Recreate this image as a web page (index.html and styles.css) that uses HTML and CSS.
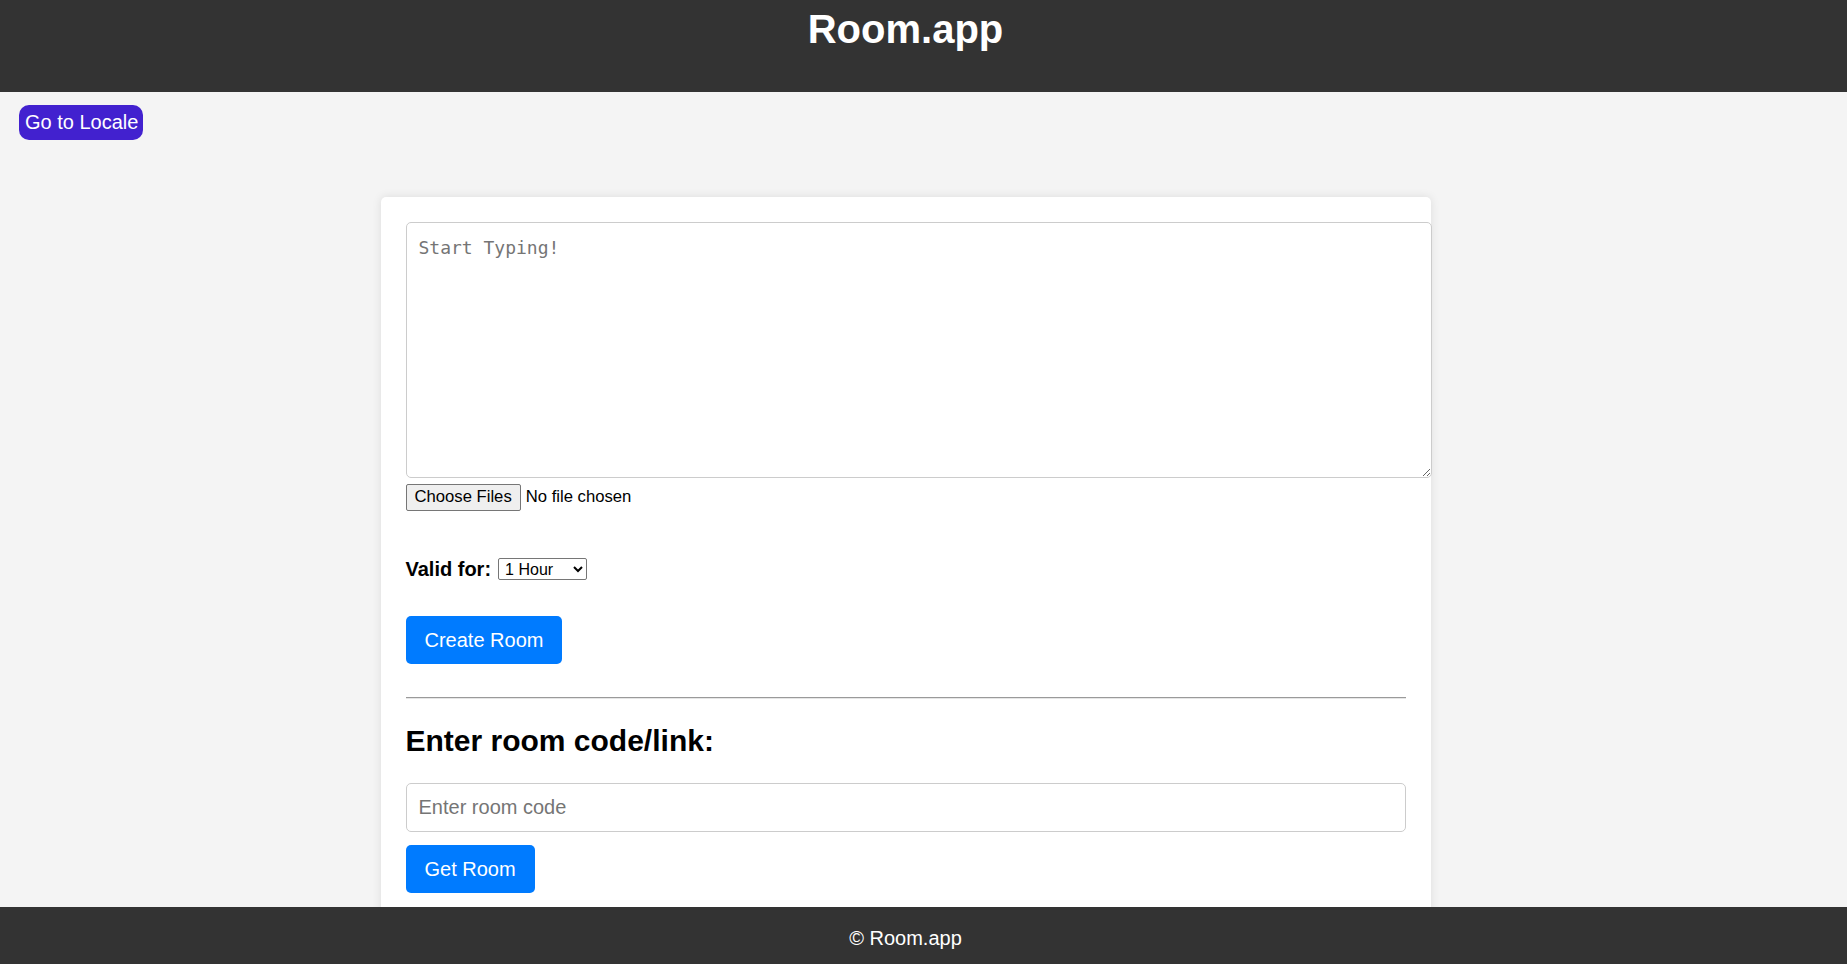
FILE: index.html
```html
<!DOCTYPE html>
<html lang="en">
<head>
<meta charset="utf-8">
<title>Room.app</title>
<link rel="stylesheet" href="styles.css">
</head>
<body>
<header class="site-header">
  <h1 class="site-title">Room.app</h1>
</header>

<div class="toolbar">
  <button class="locale-btn" type="button">Go to Locale</button>
</div>

<main class="container">
  <section class="card">
    <textarea class="editor" placeholder="Start Typing!"></textarea>
    <div class="file-row">
      <input class="file-input" type="file" multiple>
    </div>
    <div class="valid-row">
      <label class="valid-label" for="validity">Valid for:</label>
      <select class="valid-select" id="validity">
        <option>1 Hour</option>
        <option>1 Day</option>
        <option>1 Week</option>
      </select>
    </div>
    <div class="create-row">
      <button class="primary-btn" type="button">Create Room</button>
    </div>
    <hr class="divider">
    <h2 class="section-title">Enter room code/link:</h2>
    <input class="code-input" type="text" placeholder="Enter room code">
    <div class="get-row">
      <button class="primary-btn" type="button">Get Room</button>
    </div>
  </section>
</main>

<footer class="site-footer">
  <p class="footer-text">© Room.app</p>
</footer>
</body>
</html>
```

FILE: styles.css
```css
* {
  box-sizing: content-box;
}

html, body {
  margin: 0;
  padding: 0;
}

body {
  background: #f4f4f4;
  font-family: "Liberation Sans", Arial, sans-serif;
  font-size: 20px;
  color: #000;
}

.site-header {
  background: #333333;
  color: #fff;
  height: 85px;
  padding: 7px 36px 0 0;
  text-align: center;
}

.site-title {
  margin: 0;
  font-size: 40px;
  font-weight: bold;
}

.toolbar {
  padding: 13px 0 0 19px;
}

.locale-btn {
  display: block;
  background: #4221cf;
  color: #fff;
  border: none;
  border-radius: 10px;
  font-family: "Liberation Sans", Arial, sans-serif;
  font-size: 20px;
  line-height: 23px;
  padding: 6px 5px 6px 6px;
  cursor: pointer;
}

.container {
  padding: 57px 36px 80px 0;
}

.card {
  width: 1000px;
  margin: 0 auto;
  padding: 25px;
  background: #fff;
  border-radius: 5px;
  box-shadow: 0 0 10px rgba(0, 0, 0, 0.1);
}

.editor {
  display: block;
  width: 100%;
  height: 230px;
  padding: 12px;
  margin: 0;
  border: 1px solid #ccc;
  border-radius: 5px;
  font-family: "DejaVu Sans Mono", "Liberation Mono", monospace;
  font-size: 18px;
  line-height: 26px;
  resize: vertical;
  background: #fff;
}

.editor::placeholder {
  color: #757575;
}

.file-row {
  margin-top: 6px;
  height: 27px;
}

.file-input {
  font-family: "Liberation Sans", Arial, sans-serif;
  font-size: 16.67px;
  color: #000;
}

.file-input::file-selector-button {
  font-family: "Liberation Sans", Arial, sans-serif;
  font-size: 16.67px;
  padding: 2px 8px 3px 8px;
  margin-right: 5px;
  border: 1px solid #767676;
  border-radius: 2px;
  background: #efefef;
  color: #000;
}

.valid-row {
  margin-top: 47px;
  height: 22px;
  display: flex;
  align-items: center;
  gap: 7px;
}

.valid-label {
  font-weight: bold;
  font-size: 20px;
  line-height: 22px;
}

.valid-select {
  width: 89px;
  height: 22px;
  font-family: "Liberation Sans", Arial, sans-serif;
  font-size: 16px;
  border: 1px solid #767676;
  border-radius: 2px;
  background: #fff;
  color: #000;
  padding: 0 0 0 2px;
  box-sizing: border-box;
}

.create-row {
  margin-top: 36px;
}

.primary-btn {
  background: #007bff;
  color: #fff;
  border: none;
  border-radius: 5px;
  font-family: "Liberation Sans", Arial, sans-serif;
  font-size: 20px;
  line-height: 24px;
  padding: 12px 19px;
  cursor: pointer;
}

.divider {
  margin: 33px 0 0;
  border: 0;
  border-top: 1px solid #9a9a9a;
  border-bottom: 1px solid #e6e6e6;
  height: 0;
}

.section-title {
  margin: 25px 0 0;
  font-size: 30px;
  font-weight: bold;
}

.code-input {
  display: block;
  margin-top: 25px;
  width: 100%;
  box-sizing: border-box;
  height: 49px;
  padding: 12px;
  border: 1px solid #ccc;
  border-radius: 5px;
  font-family: "Liberation Sans", Arial, sans-serif;
  font-size: 20px;
}

.code-input::placeholder {
  color: #757575;
}

.get-row {
  margin-top: 13px;
}

.site-footer {
  position: fixed;
  left: 0;
  right: 0;
  bottom: 0;
  height: 57px;
  background: #333333;
  color: #fff;
  text-align: center;
  padding-right: 36px;
}

.footer-text {
  margin: 0;
  padding-top: 20px;
  font-size: 20px;
  line-height: 23px;
}
```
